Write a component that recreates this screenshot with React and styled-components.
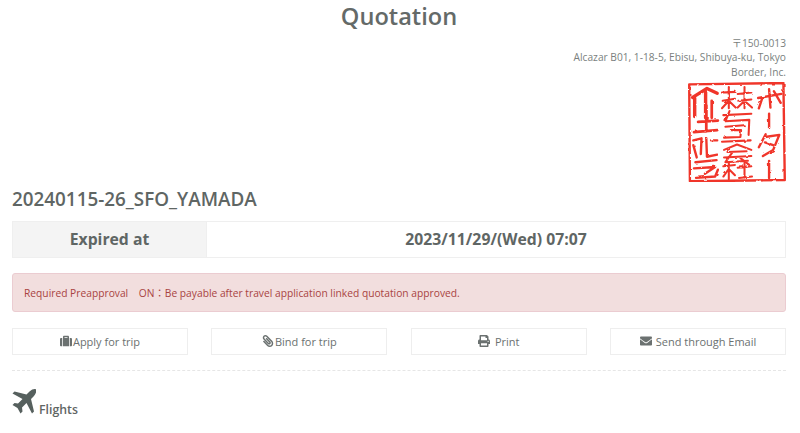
import styled, { createGlobalStyle } from "styled-components";
import { FaSuitcase, FaPaperclip, FaPrint, FaEnvelope } from "react-icons/fa";

const GlobalStyle = createGlobalStyle`
    body{
        margin: 0;
        background: #FFFFFF;
        font-family: "Open Sans", "Noto Sans CJK JP", sans-serif;
        color: #5F6664;
    }
`;

const actions = [
    { label: "Apply for trip", icon: <FaSuitcase />, gap: 1 },
    { label: "Bind for trip", icon: <ClipIcon />, gap: 1 },
    { label: "Print", icon: <FaPrint />, gap: 5 },
    { label: "Send through Email", icon: <FaEnvelope />, gap: 4 },
];

function ClipIcon(){
    return <FlippedClip />;
}

function Seal(){
    return (
        <SealSvg viewBox="22 15 284 293">
            <filter id="rough" x="-5%" y="-5%" width="110%" height="110%">
                <feTurbulence type="fractalNoise" baseFrequency="0.06" numOctaves="2" seed="4" />
                <feDisplacementMap in="SourceGraphic" scale="7" />
            </filter>
            <g filter="url(#rough)" fill="none" stroke="#F0362A" strokeLinecap="round" strokeLinejoin="round">
                <path strokeWidth="7" d="M24 22 L300 18 L304 302 L26 306 Z" />
                {/* right column */}
                <path strokeWidth="7" d="M226 62 L294 50 M258 36 L262 90 M238 62 L228 92 M272 42 L292 76" />
                <path strokeWidth="7" d="M258 108 L258 150" />
                <path strokeWidth="7" d="M248 168 L228 206 M246 176 L288 170 L270 214 L240 232 M246 192 L270 200" />
                <path strokeWidth="7" d="M258 246 L258 296" />
                {/* middle column */}
                <path strokeWidth="6" d="M120 46 L160 44 M140 30 L140 92 M122 70 L158 64 M120 92 L138 72 M142 72 L160 90 M166 50 L206 46 M186 30 L186 92 M168 70 L206 66 M166 90 L184 72 M188 72 L208 90" />
                <path strokeWidth="6" d="M124 112 L206 108 M142 100 L130 130 L200 126 L198 170 M130 146 L184 142 M146 156 L176 156 L174 176 L126 178 M120 190 L204 186" />
                <path strokeWidth="6" d="M164 198 L126 214 M164 198 L206 214 M136 220 L192 218 M126 236 L206 232 M150 222 L130 250 L196 246 M174 238 L200 258" />
                <path strokeWidth="6" d="M124 262 L158 258 M140 252 L140 300 M124 292 L138 272 M142 272 L158 288 M166 266 L206 262 M186 252 L186 296 M170 296 L208 292" />
                {/* left column */}
                <path strokeWidth="10" d="M34 60 L76 34 L106 48 M40 62 L40 116 M72 44 L72 120" />
                <path strokeWidth="8" d="M50 132 L108 128 M74 84 L74 160 M38 162 L106 156 M90 70 L90 120" />
                <path strokeWidth="7" d="M36 186 L60 180 L58 226 M36 200 L46 236 M74 180 L76 234 L106 228 M88 186 L106 186" />
                <path strokeWidth="7" d="M42 250 L104 244 M38 268 L100 264 L70 284 M44 296 L100 292 L108 272" />
            </g>
        </SealSvg>
    );
}

function PlaneIcon(){
    return (
        <PlaneSvg viewBox="0 0 24 25">
            <path d="M24 .5C23 -.5 20 .2 17.5 2.5L14.5 5.5L2.5 2.5L.5 4.5L10.5 10L6 14.5L2.5 14L.5 16L5.5 19L8.5 24.5L10.5 22.5L10 18.5L14.5 14L20 24.5L22 22.5L19 10L22 7C24 4.5 25 1.5 24 .5Z" />
        </PlaneSvg>
    );
}

export default function App(){
    return (
        <Page>
            <GlobalStyle />
            <Title>Quotation</Title>
            <Address>
                <span>〒150-0013</span>
                <span>Alcazar B01, 1-18-5, Ebisu, Shibuya-ku, Tokyo</span>
                <span>Border, Inc.</span>
                <Seal />
            </Address>
            <Code>20240115-26_SFO_YAMADA</Code>
            <InfoTable>
                <InfoHead>Expired at</InfoHead>
                <InfoValue>2023/11/29/(Wed) 07:07</InfoValue>
            </InfoTable>
            <Alert>Required Preapproval&nbsp;&nbsp;&nbsp; ON：Be payable after travel application linked quotation approved.</Alert>
            <Actions>
                {actions.map((a) => (
                    <ActionButton key={a.label} $gap={a.gap}>
                        {a.icon}
                        <span>{a.label}</span>
                    </ActionButton>
                ))}
            </Actions>
            <Divider />
            <Section>
                <PlaneIcon />
                <span>Flights</span>
            </Section>
        </Page>
    );
}

const Page = styled.div`
    width: 774px;
    height: 433px;
    overflow: hidden;
    padding-left: 12px;
`;

const Title = styled.h1`
    margin: 0;
    height: 36px;
    line-height: 32px;
    text-align: center;
    font-size: 23.6px;
    font-weight: 600;
    color: #646A68;
`;

const Address = styled.div`
    display: flex;
    flex-direction: column;
    align-items: flex-end;
    font-size: 10.2px;
    line-height: 14.3px;
    color: #7A7F7E;
    & span{
        display: block;
    }
`;

const SealSvg = styled.svg`
    display: block;
    width: 98px;
    height: 100px;
    margin-top: 3px;
    filter: blur(0.4px);
`;

const Code = styled.h2`
    margin: 2px 0 0;
    height: 30px;
    line-height: 30px;
    font-size: 18.85px;
    font-weight: 600;
    color: #5F6664;
`;

const InfoTable = styled.div`
    display: flex;
    height: 37px;
    margin-top: 7px;
    box-sizing: border-box;
    border: 1px solid #EFEFEF;
`;

const InfoHead = styled.div`
    width: 193px;
    display: flex;
    align-items: center;
    justify-content: center;
    background: #F4F4F4;
    font-size: 15.75px;
    font-weight: 700;
`;

const InfoValue = styled.div`
    flex: 1;
    display: flex;
    align-items: center;
    justify-content: center;
    border-left: 1px solid #EFEFEF;
    font-size: 15.75px;
    font-weight: 700;
`;

const Alert = styled.div`
    margin-top: 15px;
    height: 39px;
    box-sizing: border-box;
    padding-left: 11px;
    display: flex;
    align-items: center;
    background: #F2DEDE;
    border: 1px solid #EBCCD1;
    border-radius: 3px;
    font-size: 10.25px;
    color: #A94442;
    white-space: pre;
`;

const Actions = styled.div`
    display: grid;
    grid-template-columns: repeat(4, 176px);
    justify-content: space-between;
    margin-top: 16px;
`;

const ActionButton = styled.div`
    height: 27px;
    box-sizing: border-box;
    display: flex;
    align-items: center;
    justify-content: center;
    gap: ${(p) => p.$gap}px;
    border: 1px solid #EEEEEE;
    font-size: 11px;
    color: #6B7170;
    & svg{
        font-size: 12px;
    }
`;

const FlippedClip = styled(FaPaperclip)`
    transform: scaleX(-1);
`;

const Divider = styled.div`
    margin-top: 15px;
    border-top: 1px dashed #E6E6E6;
`;

const Section = styled.div`
    display: flex;
    align-items: flex-end;
    gap: 3px;
    margin-top: 18px;
    font-size: 12.3px;
    font-weight: 600;
    color: #5F6664;
    & span{
        margin-bottom: -4px;
    }
`;

const PlaneSvg = styled.svg`
    display: block;
    width: 24px;
    height: 25px;
    fill: #56605E;
`;
